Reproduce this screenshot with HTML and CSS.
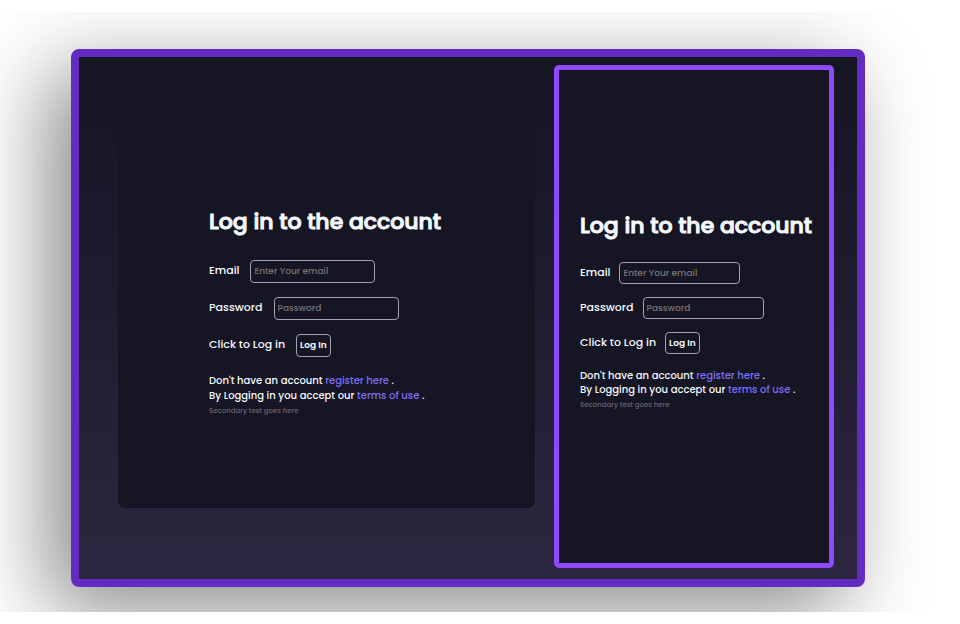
FILE: index.html
```html
<!DOCTYPE html>
<html lang="en">
<head>
<meta charset="utf-8">
<meta name="viewport" content="width=device-width, initial-scale=1">
<title>Log in</title>
<link rel="stylesheet" href="styles.css">
</head>
<body>
<main class="stage">
  <div class="frame">
    <section class="card">
      <form class="login">
        <h1 class="title">Log in to the account</h1>
        <div class="row"><label for="email">Email</label><input class="field" id="email" type="email" placeholder="Enter Your email"></div>
        <div class="row"><label for="password">Password</label><input class="field" id="password" type="password" placeholder="Password"></div>
        <div class="row"><label for="submit">Click to Log in</label><button class="button" id="submit" type="button">Log In</button></div>
        <div class="notes">
          <p>Don't have an account <a href="#register">register here</a> .</p>
          <p>By Logging in you accept our <a href="#terms">terms of use</a> .</p>
          <p class="secondary">Secondary text goes here</p>
        </div>
      </form>
    </section>
    <section class="card card-narrow">
      <form class="login">
        <h2 class="title">Log in to the account</h2>
        <div class="row"><label for="email-narrow">Email</label><input class="field" id="email-narrow" type="email" placeholder="Enter Your email"></div>
        <div class="row"><label for="password-narrow">Password</label><input class="field" id="password-narrow" type="password" placeholder="Password"></div>
        <div class="row"><label for="submit-narrow">Click to Log in</label><button class="button" id="submit-narrow" type="button">Log In</button></div>
        <div class="notes">
          <p>Don't have an account <a href="#register">register here</a> .</p>
          <p>By Logging in you accept our <a href="#terms">terms of use</a> .</p>
          <p class="secondary">Secondary text goes here</p>
        </div>
      </form>
    </section>
  </div>
</main>
</body>
</html>
```
FILE: styles.css
```css
* {
  box-sizing: border-box;
}

body {
  margin: 0;
  padding: 12px 0;
  background: #fff;
  color: #f5faff;
  font-family: Poppins, Inter, sans-serif;
  font-weight: 500;
}

.stage {
  display: flex;
  min-height: calc(100vh - 24px);
  padding: 37px 95px 25px 71px;
  overflow: hidden;
}

.frame {
  flex: 1;
  display: grid;
  grid-template-columns: 417fr 280fr;
  gap: 19px;
  padding: 8px 23px 11px 39px;
  border: 8px solid #642bc2;
  border-radius: 8px;
  background: linear-gradient(#161522, #1b192c 30%, #2d2640) padding-box;
  box-shadow: -23px 23px 84px rgba(0, 0, 0, 0.47);
}

.card {
  --row-height: 23px;
  --row-gap: 14px;
  --label-gap: 11px;
  --field-width: 125px;
  --note-line: 15px;
  align-self: center;
  padding: 78px 16px 89px 91px;
  border-radius: 7px;
  background: #161523;
}

.card-narrow {
  --row-height: 22px;
  --row-gap: 13px;
  --label-gap: 9px;
  --field-width: 121px;
  --note-line: 14px;
  align-self: stretch;
  padding: 138px 0 80px 21px;
  border: 5px solid #9049ff;
  border-radius: 5px;
}

.login {
  display: flex;
  flex-direction: column;
  gap: var(--row-gap);
  white-space: nowrap;
}

.title {
  margin: 0 0 6px;
  font-size: 22px;
  font-weight: 500;
  line-height: 36px;
  -webkit-text-stroke: 1px;
}

.card-narrow .title {
  margin-bottom: 5px;
}

.row {
  display: flex;
  align-items: center;
  gap: var(--label-gap);
  height: var(--row-height);
  font-size: 11px;
}

.row label {
  padding-bottom: 2px;
}

.field,
.button {
  height: 100%;
  margin: 0;
  padding: 0 3px;
  border: 1px solid #a3a3ab;
  border-radius: 4px;
  background: transparent;
  color: inherit;
  font: inherit;
  font-size: 9px;
}

.field {
  width: var(--field-width);
}

.field::placeholder {
  color: #757575;
  opacity: 1;
}

.button {
  font-weight: 600;
}

.notes {
  margin-top: 2px;
  font-size: 10px;
  line-height: var(--note-line);
}

.notes p {
  margin: 0;
}

.notes a {
  color: #7c70f8;
  text-decoration: none;
}

.notes .secondary {
  color: #686773;
  font-size: 7px;
  line-height: 16px;
}
```
